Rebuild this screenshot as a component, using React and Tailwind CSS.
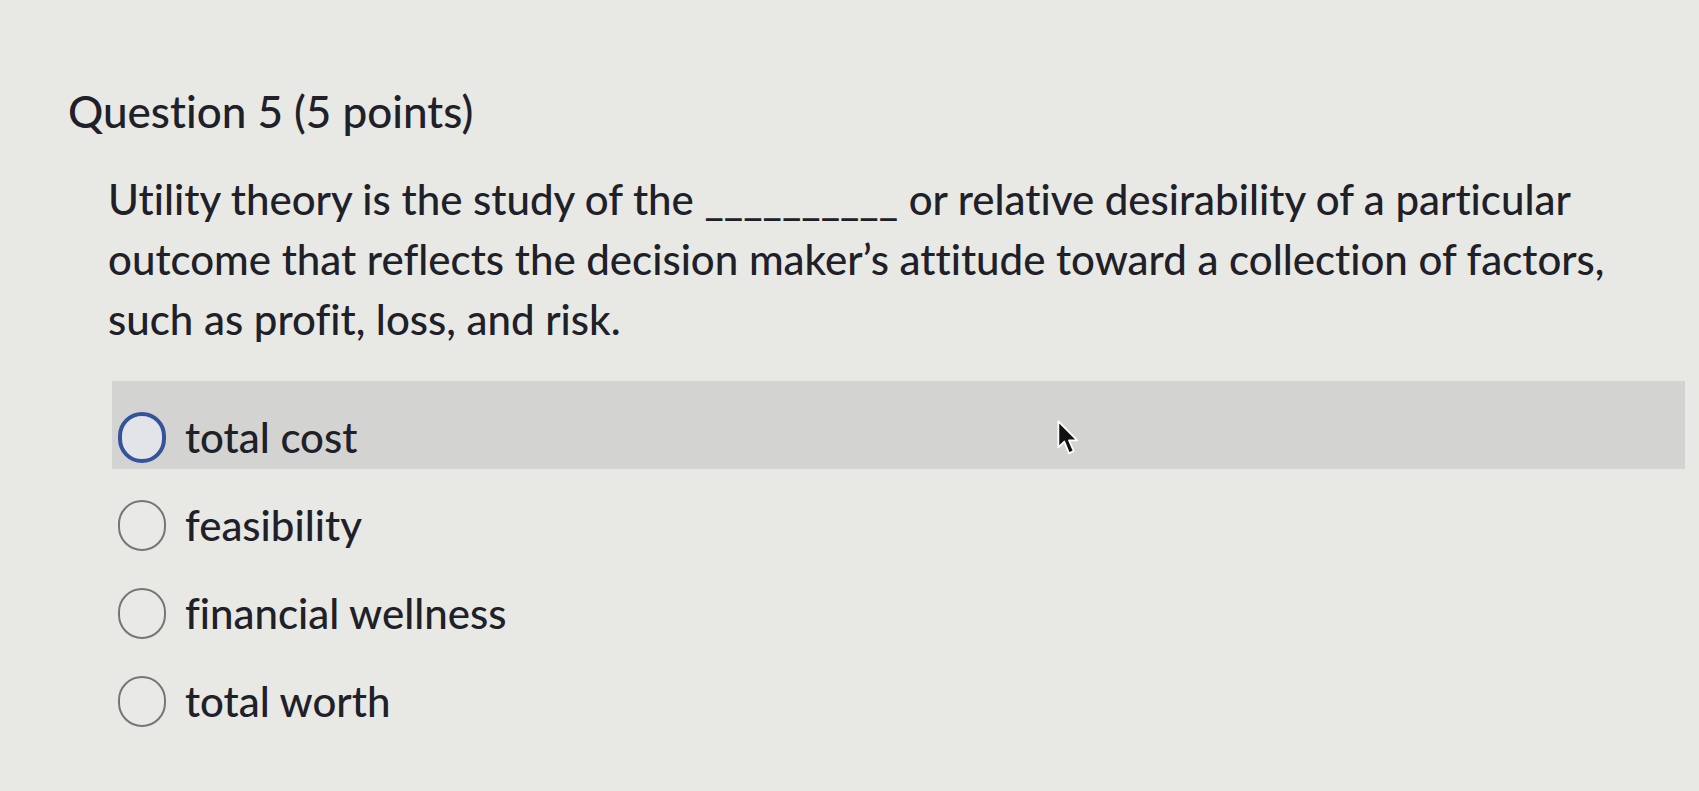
import React from "react";

const font = { fontFamily: "Lato, 'Open Sans', sans-serif" };

function Radio({ active }) {
  return active ? (
    <div className="w-[48px] h-[51px] shrink-0 rounded-full border-[4px] border-[#34539c] bg-[#e2e4e8]" />
  ) : (
    <div className="w-[48px] h-[51px] shrink-0 rounded-full border-[2.5px] border-[#767676] bg-[#e9e9e7]" />
  );
}

function Cursor() {
  return (
    <svg className="absolute left-[944px] top-[38px]" width="26" height="38" viewBox="0 0 22 32">
      <path d="M2 2 L2 24 L7 19 L11 29 L15 27 L11 18 L18 18 Z" fill="#111" stroke="#fff" strokeWidth="1.5" strokeLinejoin="round" />
    </svg>
  );
}

export default function App() {
  const options = ["total cost", "feasibility", "financial wellness", "total worth"];
  return (
    <div
      className="w-[1699px] h-[791px] overflow-hidden bg-[#e8e8e5] text-[#202028] font-medium [font-variant-ligatures:none]"
      style={font}
    >
      <div className="pt-[83px] pl-[68px] text-[44px] leading-[56px]">Question 5 (5 points)</div>
      <div className="pt-[30px] pl-[108px] text-[42px] leading-[60px]">
        <div>Utility theory is the study of the __________ or relative desirability of a particular</div>
        <div>outcome that reflects the decision maker’s attitude toward a collection of factors,</div>
        <div>such as profit, loss, and risk.</div>
      </div>
      <div className="mt-[32px] ml-[112px] w-[1573px] flex flex-col">
        {options.map((o, i) => (
          <div
            key={o}
            className={
              "relative h-[88px] flex items-center gap-[19px] pl-[6px] pt-[24px] text-[42px] " +
              (i === 0 ? "bg-[#d3d3d1]" : "")
            }
          >
            <Radio active={i === 0} />
            <span className="leading-[50px]">{o}</span>
            {i === 0 && <Cursor />}
          </div>
        ))}
      </div>
    </div>
  );
}
